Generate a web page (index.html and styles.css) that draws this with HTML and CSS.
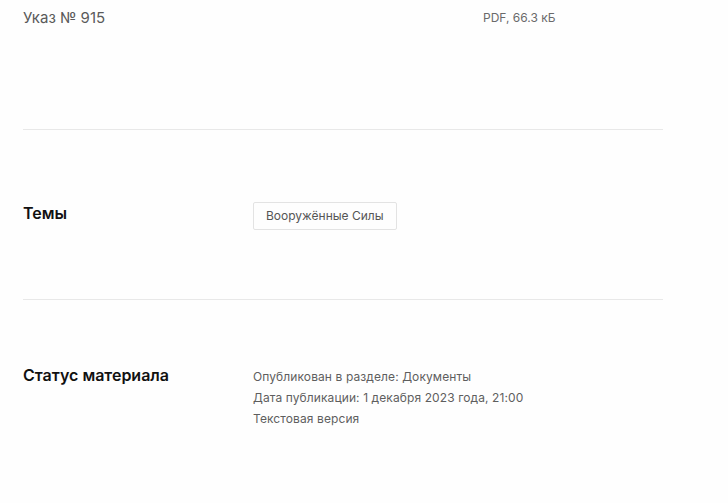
FILE: index.html
```html
<!DOCTYPE html>
<html lang="ru">
<head>
    <meta charset="UTF-8">
    <meta name="viewport" content="width=device-width, initial-scale=1.0">
    <title>Указ № 915</title>
    <link rel="stylesheet" href="styles.css">
</head>
<body>
    <div class="read">
        <!-- Files -->
        <div class="read-row read-files">
            <div class="file-name">Указ № 915</div>
            <div class="file-info">PDF, 66.3 кБ</div>
        </div>

        <div class="read-row read-tags">
            <h3 class="row-title">Темы</h3>
            <div class="row-body">
                <a class="tag" href="#">Вооружённые Силы</a>
            </div>
        </div>

        <div class="read-row read-status">
            <h3 class="row-title">Статус материала</h3>
            <div class="row-body status-list">
                <p>Опубликован в разделе: Документы</p>
                <p>Дата публикации: 1 декабря 2023 года, 21:00</p>
                <p>Текстовая версия</p>
            </div>
        </div>
    </div>
</body>
</html>
```

FILE: styles.css
```css
body {
    margin: 0;
    background-color: #fefefe;
    font-family: Inter, Roboto, "Noto Sans", Arial, sans-serif;
    color: #1b1b1b;
}
.read {
    width: 640px;
    margin-left: 23px;
}
.read-row {
    display: flex;
    border-top: 1px solid #e8e8e8;
}
.read-row:first-child {
    border-top: none;
}
.read-files {
    padding-top: 9px;
    height: 120px;
}
.file-name {
    width: 460px;
    font-size: 15px;
    line-height: 18px;
    color: #5a5a5a;
}
.file-info {
    font-size: 12px;
    line-height: 18px;
    color: #6a6a6a;
}
.row-title {
    width: 230px;
    margin: 0;
    font-size: 16px;
    font-weight: 600;
    line-height: 22px;
    color: #111;
}
.read-tags {
    padding-top: 72px;
    height: 97px;
}
.tag {
    display: inline-block;
    padding: 0 12px;
    height: 26px;
    line-height: 26px;
    border: 1px solid #e3e3e3;
    border-radius: 2px;
    font-size: 12px;
    color: #555;
    text-decoration: none;
}
.read-status {
    padding-top: 64px;
    height: 140px;
}
.status-list {
    padding-top: 2px;
}
.status-list p {
    margin: 0;
    font-size: 12px;
    line-height: 21px;
    letter-spacing: 0.1px;
    color: #5e5e5e;
}
```
